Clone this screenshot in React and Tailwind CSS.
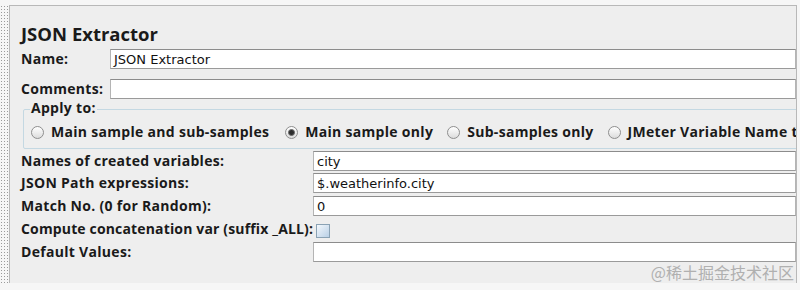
import React from "react";

const font = { fontFamily: '"Open Sans", "DejaVu Sans", sans-serif' };
const fieldFont = { fontFamily: '"DejaVu Sans", "Liberation Sans", sans-serif' };

function Field({ value, className = "" }) {
  return (
    <div
      className={`h-[20px] bg-white border border-[#b4b4b4] border-t-[#8c8c8c] border-b-[#9a9a9a] flex items-center pl-[3px] text-[13px] text-[#111] leading-none ${className}`}
      style={fieldFont}
    >
      {value}
    </div>
  );
}

function Radio({ checked }) {
  return (
    <div className="w-[13px] h-[13px] rounded-full border border-[#8e8e8e] bg-gradient-to-b from-[#ffffff] to-[#dcdcdc] flex items-center justify-center shrink-0">
      {checked && <div className="w-[7px] h-[7px] rounded-full bg-[#2e2e2e] border border-[#6a6a6a]" />}
    </div>
  );
}

function Label({ children, className = "" }) {
  return <div className={`font-bold text-[14px] tracking-[0.3px] text-[#1a1a1a] leading-none whitespace-nowrap ${className}`}>{children}</div>;
}

export default function App() {
  return (
    <div className="w-[800px] h-[290px] bg-[#f6f6f6] relative overflow-hidden flex flex-col" style={font}>
      <div className="h-[5px] shrink-0" />
      <div className="flex h-[278px] shrink-0">
        <div className="w-[9px] shrink-0 bg-[radial-gradient(#9a9a9a_0.8px,transparent_0.9px)] bg-[length:3px_3px]" />
        <div className="w-[788px] shrink-0 bg-[#eeeeee] border-t border-l border-r border-[#b8b8b8] overflow-hidden flex flex-col">
          <div className="pl-[11px] mt-[15px] h-[26px] flex items-center font-bold text-[18.5px] text-[#1a1a1a]">JSON Extractor</div>
          <div className="flex items-center mt-[2px] pl-[11px]">
            <Label className="w-[89px]">Name:</Label>
            <Field value="JSON Extractor" className="flex-1" />
          </div>
          <div className="flex items-center mt-[10px] pl-[11px]">
            <Label className="w-[89px]">Comments:</Label>
            <Field value="" className="flex-1" />
          </div>
          <div className="relative mt-[10px] ml-[13px] mr-[-200px] h-[40px] shrink-0 border border-[#c4d8e2] rounded-[2px] flex items-center pl-[7px]">
            <div className="absolute left-[6px] top-[-9px] bg-[#eeeeee] px-[1px] font-bold text-[14px] tracking-[0.3px] leading-none text-[#1a1a1a]">Apply to:</div>
            <div className="flex items-center gap-[7px] mt-[6px] shrink-0">
              <Radio />
              <Label>Main sample and sub-samples</Label>
            </div>
            <div className="flex items-center gap-[7px] ml-[16px] mt-[6px] shrink-0">
              <Radio checked />
              <Label>Main sample only</Label>
            </div>
            <div className="flex items-center gap-[7px] ml-[14px] mt-[6px] shrink-0">
              <Radio />
              <Label>Sub-samples only</Label>
            </div>
            <div className="flex items-center gap-[7px] ml-[14px] mt-[6px] shrink-0">
              <Radio />
              <Label>JMeter Variable Name to use</Label>
            </div>
          </div>
          <div className="flex flex-col mt-[2px] pl-[11px] gap-[2px]">
            <div className="flex items-center">
              <Label className="w-[292px]">Names of created variables:</Label>
              <Field value="city" className="flex-1" />
            </div>
            <div className="flex items-center">
              <Label className="w-[292px]">JSON Path expressions:</Label>
              <Field value="$.weatherinfo.city" className="flex-1" />
            </div>
            <div className="flex items-center mt-[1px]">
              <Label className="w-[292px]">Match No. (0 for Random):</Label>
              <Field value="0" className="flex-1" />
            </div>
            <div className="flex items-center h-[22px] gap-[3px]">
              <Label className="tracking-[0.15px]">Compute concatenation var (suffix _ALL):</Label>
              <div className="w-[14px] h-[14px] mt-[3px] border border-[#8aa2b4] bg-gradient-to-br from-[#f4f8fc] to-[#b9d0e6]" />
            </div>
            <div className="flex items-center">
              <Label className="w-[292px]">Default Values:</Label>
              <Field value="" className="flex-1" />
            </div>
          </div>
        </div>
      </div>
      <div className="absolute right-[6px] top-[264px] text-[16px] text-[#b0b0b0] leading-none" style={{ fontFamily: '"Noto Sans CJK SC", sans-serif' }}>
        @稀土掘金技术社区
      </div>
    </div>
  );
}
